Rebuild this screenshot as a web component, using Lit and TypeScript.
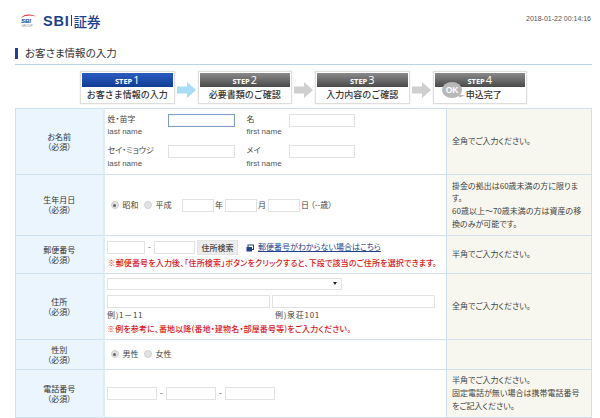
import { LitElement, html, css } from "lit";
import { customElement } from "lit/decorators.js";

const STEPS = [
  { n: "1", label: "お客さま情報の入力", on: true },
  { n: "2", label: "必要書類のご確認", on: false },
  { n: "3", label: "入力内容のご確認", on: false },
  { n: "4", label: "申込完了", on: false },
];

@customElement("app-root")
export class AppRoot extends LitElement {
  static styles = css`
    :host {
      display: block;
      width: 600px;
      height: 418px;
      overflow: hidden;
      background: #fff;
      font-family: "Noto Sans CJK JP", "Liberation Sans", sans-serif;
      font-size: 8px;
      color: #444;
      font-feature-settings: "palt";
      box-sizing: border-box;
    }
    .top {
      display: flex;
      justify-content: space-between;
      height: 44px;
      padding: 12px 9px 0 20px;
      box-sizing: border-box;
    }
    .logo { display: flex; align-items: center; height: 17px; gap: 6px; }
    .brand {
      font-family: "Liberation Sans", sans-serif;
      font-size: 14.5px;
      font-weight: 700;
      color: #1b3f8b;
      letter-spacing: 0.8px;
      display: flex;
      align-items: center;
    }
    .brand .jp { font-family: "Noto Sans CJK JP", sans-serif; font-size: 13.5px; font-weight: 500; letter-spacing: 0; }
    .brand .sep { width: 1px; height: 11px; background: #1b3f8b; margin: 0 2px 0 1px; }
    .stamp {
      font-family: "Liberation Sans", sans-serif;
      font-size: 7px;
      color: #555;
      padding-top: 3px;
    }
    .title {
      margin: 0 8px 0 15px;
      height: 20px;
      border-bottom: 1px solid #bcd2e8;
      display: flex;
      align-items: flex-start;
      gap: 7px;
      font-size: 10.5px;
      color: #333;
      line-height: 14px;
    }
    .title::before {
      content: "";
      width: 3px;
      height: 11px;
      margin-top: 4px;
      background: #1f3f94;
    }
    .title span { padding-top: 2px; }
    .steps {
      display: flex;
      height: 43px;
      padding: 6px 0 0 80px;
      box-sizing: border-box;
    }
    .step {
      width: 94.5px;
      height: 32.5px;
      box-sizing: border-box;
      border: 1px solid #dedede;
      box-shadow: 0 0 1px #ccc;
      background: #fff;
      padding: 1px;
      position: relative;
    }
    .step .band {
      height: 14px;
      background: linear-gradient(#8a8a8a, #4a4a4a);
      color: #fff;
      font-family: "Open Sans", "Liberation Sans", sans-serif;
      font-weight: 700;
      font-size: 7.5px;
      display: flex;
      align-items: baseline;
      justify-content: center;
      line-height: 14px;
    }
    .step.on .band { background: linear-gradient(#2a5cc0, #123c94); }
    .step .band b { font-size: 11px; font-weight: 400; margin-left: 1px; }
    .step .txt {
      text-align: center;
      font-size: 9px;
      font-weight: 500;
      line-height: 15px;
      color: #333;
      font-feature-settings: normal;
    }
    .step.last .txt { padding-left: 8px; }
    .ok {
      position: absolute;
      left: 8.5px;
      top: 10px;
      width: 20px;
      height: 16px;
      border-radius: 50%;
      background: #b8b8b8;
      color: #fff;
      font: 700 8.5px/16px "Liberation Sans", sans-serif;
      text-align: center;
    }
    .ok::after {
      content: "";
      position: absolute;
      right: -3px;
      bottom: 0;
      border-left: 6px solid #b8b8b8;
      border-bottom: 3px solid transparent;
      transform: rotate(10deg);
    }
    .arrow { width: 23px; display: flex; align-items: center; justify-content: center; }
    table {
      border-collapse: collapse;
      table-layout: fixed;
      width: 577px;
      margin-left: 15px;
    }
    td { border: 1px solid #cfe0ee; padding: 0; line-height: 12.7px; box-sizing: border-box; }
    td.k {
      width: 88px;
      background: #eaf5fd;
      text-align: center;
      font-weight: 400;
      line-height: 10px;
      color: #333;
      border-right: 2px solid #e0edf7;
    }
    td.n { width: 145px; background: #f8f7ef; padding: 0 3px 0 5px; white-space: nowrap; }
    .r1 { height: 66px; }
    .r2 { height: 61px; }
    .r3 { height: 38px; }
    .r4 { height: 66px; }
    .r5 { height: 30px; }
    .r6 { height: 48px; }
    input.t {
      box-sizing: border-box;
      height: 13px;
      border: 1px solid #e2e2e2;
      background: #fff;
      margin: 0;
      padding: 0;
      display: block;
      outline: none;
      flex: none;
    }
    input.focus { border-color: #7e9ec9; box-shadow: inset 0 0 1px #a8bfdc; }
    .name { display: grid; grid-template-columns: 60px 79px 42px 66px; padding: 0 0 0 3px; row-gap: 5.5px; align-items: start; }
    .name .lab { line-height: 12.5px; }
    .name input { width: 67px; margin-top: 1px; }
    .name input.s { width: 66px; }
    .nm { font-family: "Liberation Sans", sans-serif; font-size: 8px; color: #555; }
    .radio {
      display: inline-block;
      width: 6px;
      height: 6px;
      border-radius: 50%;
      background: #e2e2e2;
      border: 1px solid #d0d0d0;
      flex: none;
      position: relative;
    }
    .radio.on::after {
      content: "";
      position: absolute;
      left: 1.5px;
      top: 1.5px;
      width: 3px;
      height: 3px;
      border-radius: 50%;
      background: #666;
    }
    .row { display: flex; align-items: center; }
    .opts { padding-left: 6px; }
    .opts .txt1 { margin: 0 5px 0 4px; }
    .birth .ymd { width: 32px; }
    .birth .first { margin-left: 5.5px; }
    .birth .u { width: 11px; padding-left: 1px; box-sizing: border-box; }
    .birth .age { padding-left: 1px; }
    .zip { padding: 0 0 0 2.5px; }
    .zip .a { width: 38px; }
    .zip .b { width: 41px; }
    .zip .tel { width: 50px; }
    .dash { width: 9px; text-align: center; flex: none; }
    .btn {
      height: 15px;
      width: 41px;
      margin-left: 2px;
      background: #ececec;
      border: 1px solid #e4e4e4;
      box-sizing: border-box;
      text-align: center;
      line-height: 13px;
      font-weight: 500;
      color: #444;
    }
    .ico { margin: 0 4px 0 8px; flex: none; }
    a { color: #24408e; text-decoration: underline; }
    .red { color: #d61518; font-weight: 500; line-height: 13px; letter-spacing: 0.15px; }
    .zipnote { padding: 1px 0 0 3px; }
    .addr { padding: 0 0 0 2.5px; }
    .sel {
      box-sizing: border-box;
      width: 235px;
      height: 12px;
      border: 1px solid #e2e2e2;
      position: relative;
    }
    .sel::after {
      content: "";
      position: absolute;
      right: 4px;
      top: 3px;
      border: 2px solid transparent;
      border-top: 3px solid #222;
    }
    .two { display: flex; gap: 2px; margin-top: 5px; }
    .two input { width: 163px; }
    .ex { display: flex; line-height: 12.5px; letter-spacing: 0.7px; margin-top: 0.5px; }
    .ex span:first-child { width: 168px; }
    .addrnote { padding-top: 1px; }
  `;

  private k(a: string) {
    return html`<td class="k">${a}<br />（必須）</td>`;
  }

  render() {
    return html`
      <div class="top">
        <div class="logo">
          <svg width="17" height="15" viewBox="0 0 17 15">
            <path d="M1 5 C4 .5 12 .5 16 3.5 C11 1.8 5 2 1 5Z" fill="#d8262c" />
            <text x="1" y="9.5" font-family="Liberation Sans" font-size="6" font-weight="700" font-style="italic" fill="#1b3f8b">SBI</text>
            <text x="1.5" y="14" font-family="Liberation Sans" font-size="3" fill="#888">GROUP</text>
          </svg>
          <div class="brand">SBI<i class="sep"></i><span class="jp">証券</span></div>
        </div>
        <div class="stamp">2018-01-22 00:14:16</div>
      </div>
      <div class="title"><span>お客さま情報の入力</span></div>
      <div class="steps">
        ${STEPS.map(
          (s, i) => html`
            <div class="step ${s.on ? "on" : ""} ${i === 3 ? "last" : ""}">
              <div class="band">STEP<b>${s.n}</b></div>
              <div class="txt">${s.label}</div>
              ${i === 3 ? html`<div class="ok">OK</div>` : ""}
            </div>
            ${i < 3
              ? html`<div class="arrow">
                  <svg width="19" height="16" viewBox="0 0 19 16">
                    <path d="M0 4.5H10V0L19 8L10 16V11.5H0Z" fill="${i === 0 ? "#a9dcf5" : "#cfcfcf"}" />
                  </svg>
                </div>`
              : ""}
          `
        )}
      </div>
      <table>
        <tr class="r1">
          ${this.k("お名前")}
          <td>
            <div class="name">
              <div class="lab">姓・苗字<br /><span class="nm">last name</span></div>
              <input class="t focus" />
              <div class="lab">名<br /><span class="nm">first name</span></div>
              <input class="t s" />
              <div class="lab">セイ・ミョウジ<br /><span class="nm">last name</span></div>
              <input class="t" />
              <div class="lab">メイ<br /><span class="nm">first name</span></div>
              <input class="t s" />
            </div>
          </td>
          <td class="n">全角でご入力ください。</td>
        </tr>
        <tr class="r2">
          ${this.k("生年月日")}
          <td>
            <div class="row opts birth">
              <i class="radio on"></i><span class="txt1">昭和</span><i class="radio"></i><span class="txt1">平成</span>
              <input class="t ymd first" /><span class="u">年</span>
              <input class="t ymd" /><span class="u">月</span>
              <input class="t ymd" /><span class="age">日 （--歳）</span>
            </div>
          </td>
          <td class="n">掛金の拠出は60歳未満の方に限りま<br />す。<br />60歳以上～70歳未満の方は資産の移<br />換のみが可能です。</td>
        </tr>
        <tr class="r3">
          ${this.k("郵便番号")}
          <td>
            <div class="row zip">
              <input class="t a" /><span class="dash">-</span>
              <input class="t b" />
              <div class="btn">住所検索</div>
              <svg class="ico" width="8" height="8" viewBox="0 0 8 8">
                <rect x="2" y="1" width="5.5" height="4.5" fill="#fff" stroke="#24408e" />
                <rect x="0.5" y="3" width="5.5" height="4.5" fill="#24408e" />
              </svg>
              <a>郵便番号がわからない場合はこちら</a>
            </div>
            <div class="red zipnote">※郵便番号を入力後、「住所検索」ボタンをクリックすると、下段で該当のご住所を選択できます。</div>
          </td>
          <td class="n">半角でご入力ください。</td>
        </tr>
        <tr class="r4">
          ${this.k("住所")}
          <td>
            <div class="addr">
              <div class="sel"></div>
              <div class="two">
                <input class="t" />
                <input class="t" />
              </div>
              <div class="ex"><span>例)1－11</span><span>例)泉荘101</span></div>
              <div class="red addrnote">※例を参考に、番地以降(番地・建物名・部屋番号等)をご入力ください。</div>
            </div>
          </td>
          <td class="n">全角でご入力ください。</td>
        </tr>
        <tr class="r5">
          ${this.k("性別")}
          <td>
            <div class="row opts">
              <i class="radio on"></i><span class="txt1">男性</span><i class="radio"></i><span class="txt1">女性</span>
            </div>
          </td>
          <td class="n"></td>
        </tr>
        <tr class="r6">
          ${this.k("電話番号")}
          <td>
            <div class="row zip">
              <input class="t tel" /><span class="dash">-</span>
              <input class="t tel" /><span class="dash">-</span>
              <input class="t tel" />
            </div>
          </td>
          <td class="n">半角でご入力ください。<br />固定電話が無い場合は携帯電話番号<br />をご記入ください。</td>
        </tr>
      </table>
    `;
  }
}
